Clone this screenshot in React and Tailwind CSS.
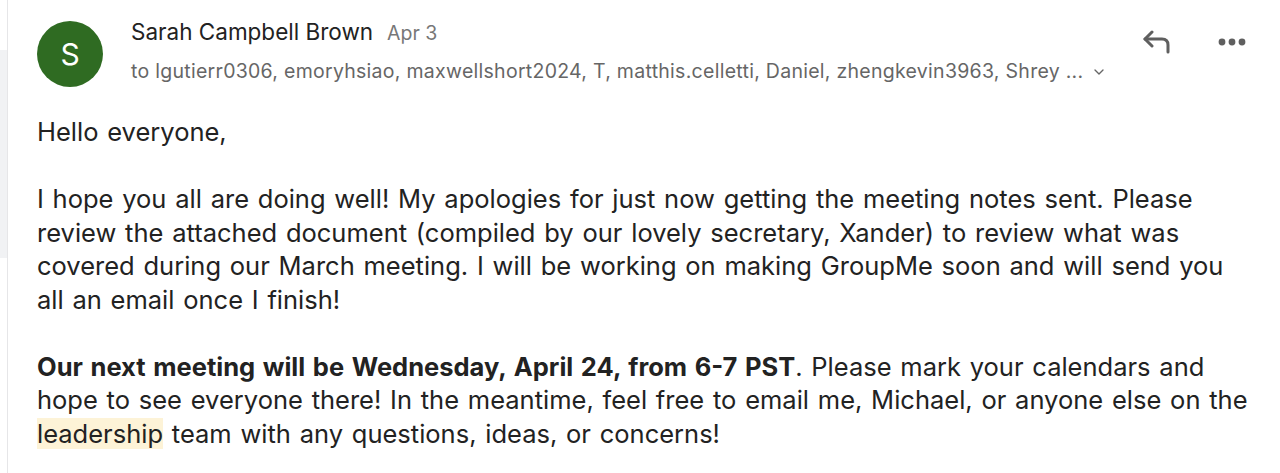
import { ChevronDown } from 'lucide-react';

const RECIPIENTS = 'lgutierr0306, emoryhsiao, maxwellshort2024, T, matthis.celletti, Daniel, zhengkevin3963, Shrey ...';

export default function App() {
  return (
    <div className="w-[1280px] h-[473px] bg-white flex overflow-hidden font-['Inter',sans-serif] text-[#222]">
      {/* left rail */}
      <div className="w-[8px] shrink-0 flex flex-col border-r border-[#e6e6e8]">
        <div className="h-[50px]" />
        <div className="h-[208px] bg-[#f1f2f4]" />
      </div>

      <div className="flex-1 pl-[29px] pr-[20px]">
        {/* header */}
        <div className="flex items-start pt-[21px]">
          <div className="w-[66px] h-[66px] rounded-full bg-[#2f6b22] flex items-center justify-center text-white text-[30px] shrink-0">
            S
          </div>
          <div className="ml-[28px] flex-1 min-w-0">
            <div className="flex items-baseline gap-[14px] h-[24px] mt-[-6px]">
              <span className="text-[22.5px] text-[#222]">Sarah Campbell Brown</span>
              <span className="text-[19.5px] text-[#777]">Apr 3</span>
            </div>
            <div className="flex items-center mt-[18px] text-[19.5px] tracking-[0.28px] text-[#666]">
              <span className="whitespace-nowrap">to {RECIPIENTS}</span>
              <ChevronDown className="w-[16px] h-[16px] ml-[8px] text-[#666]" strokeWidth={2} />
            </div>
          </div>
          <div className="flex items-center gap-[46px] pt-[9px] pr-[14px]">
            <svg width="30" height="24" viewBox="0 0 30 24" fill="none" stroke="#5f5f5f" strokeWidth="3" strokeLinecap="round" strokeLinejoin="round">
              <path d="M10 2 L3 9 L10 16" />
              <path d="M3 9 H20 Q26 9 26 15 V22" />
            </svg>
            <svg width="28" height="8" viewBox="0 0 28 8" fill="#5f5f5f">
              <circle cx="4" cy="4" r="3.4" />
              <circle cx="14" cy="4" r="3.4" />
              <circle cx="24" cy="4" r="3.4" />
            </svg>
          </div>
        </div>

        {/* body */}
        <div className="mt-[28px] text-[25.5px] leading-[33.4px] [word-spacing:1.6px] text-[#222] whitespace-nowrap">
          <p className="mb-[34px]">Hello everyone,</p>
          <p className="mb-[34px]">
            I hope you all are doing well! My apologies for just now getting the meeting notes sent. Please<br />
            review the attached document (compiled by our lovely secretary, Xander) to review what was<br />
            covered during our March meeting. I will be working on making GroupMe soon and will send you<br />
            all an email once I finish!
          </p>
          <p>
            <span className="font-bold">Our next meeting will be Wednesday, April 24, from 6-7 PST</span>. Please mark your calendars and<br />
            hope to see everyone there! In the meantime, feel free to email me, Michael, or anyone else on the<br />
            <span className="bg-[#fdf3d7]">leadership</span> team with any questions, ideas, or concerns!
          </p>
        </div>
      </div>
    </div>
  );
}
